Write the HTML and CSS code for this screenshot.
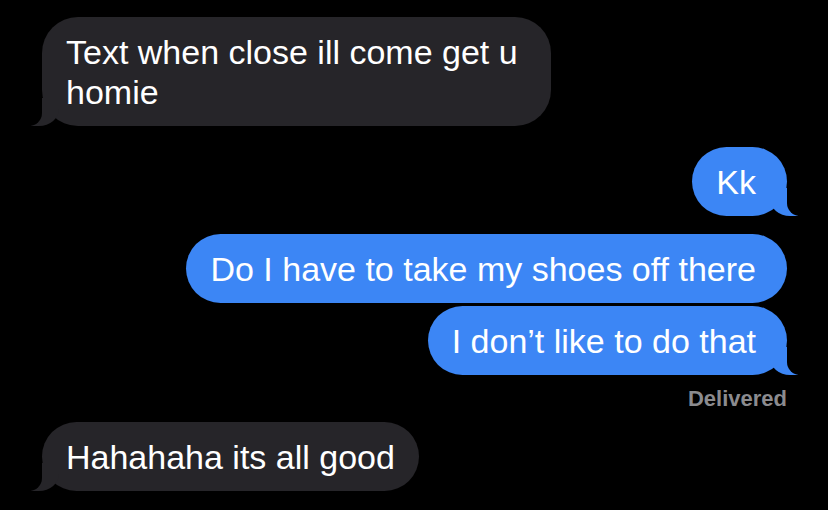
FILE: index.html
```html
<!DOCTYPE html>
<html>
<head>
<meta charset="utf-8">
<link rel="stylesheet" href="styles.css">
</head>
<body>
<div class="chat">
  <div class="bubble in tail wide g1">Text when close ill come get u homie</div>
  <div class="bubble out tail g2">Kk</div>
  <div class="bubble out g3">Do I have to take my shoes off there</div>
  <div class="bubble out tail g4">I don’t like to do that</div>
  <div class="status">Delivered</div>
  <div class="bubble in tail g5">Hahahaha its all good</div>
</div>
</body>
</html>
```
FILE: styles.css
```css
html, body {
  margin: 0;
  padding: 0;
  background: #000;
  height: 100%;
  overflow: hidden;
}

.chat {
  display: flex;
  flex-direction: column;
  padding: 17px 41px 0 42px;
  font-family: "Liberation Sans", Arial, sans-serif;
}

.bubble {
  position: relative;
  font-size: 34px;
  line-height: 40px;
  color: #fff;
  padding: 14.5px 24px;
  border-radius: 35px;
  max-width: 509px;
  box-sizing: border-box;
}

.bubble.wide {
  width: 509px;
  border-radius: 36px;
}

.in {
  align-self: flex-start;
  background: #262529;
  padding-right: 24px;
}

.out {
  align-self: flex-end;
  background: #3c86f5;
  padding-right: 31px;
  max-width: 640px;
}

.tail::before,
.tail::after {
  content: "";
  position: absolute;
  bottom: 0;
  height: 28px;
}

.out.tail::before {
  right: -11px;
  width: 28px;
  background: #3c86f5;
  border-bottom-left-radius: 20px 17px;
}

.out.tail::after {
  right: -30px;
  width: 30px;
  background: #000;
  border-bottom-left-radius: 13px;
}

.in.tail::before {
  left: -11px;
  width: 28px;
  background: #262529;
  border-bottom-right-radius: 20px 17px;
}

.in.tail::after {
  left: -30px;
  width: 30px;
  background: #000;
  border-bottom-right-radius: 13px;
}

.g2 { margin-top: 21px; }
.g3 { margin-top: 18px; }
.g4 { margin-top: 3px; }
.g5 { margin-top: 10px; }

.status {
  align-self: flex-end;
  margin-top: 11px;
  font-size: 22px;
  line-height: 26px;
  font-weight: 700;
  color: #8b8b8f;
}
```
